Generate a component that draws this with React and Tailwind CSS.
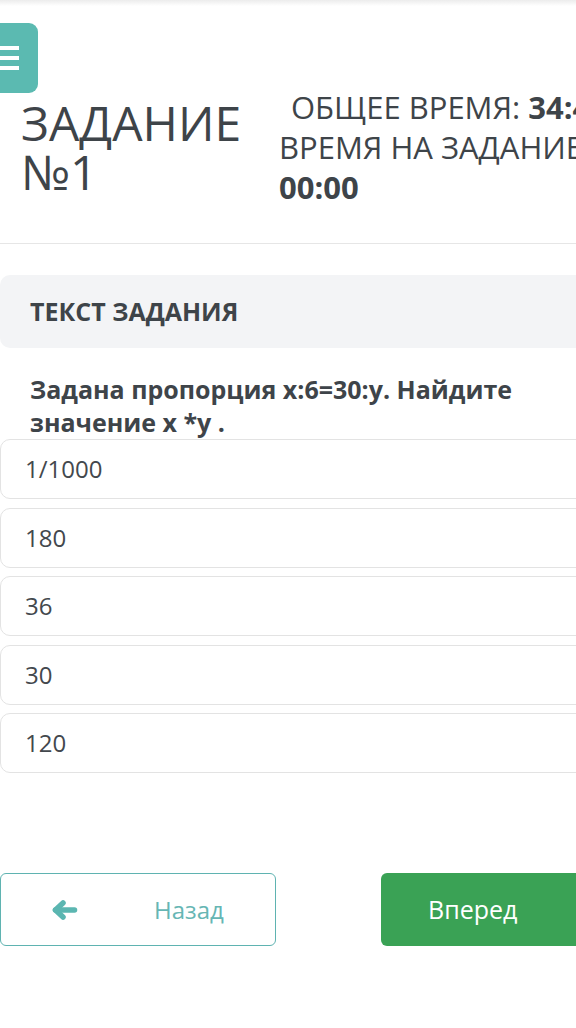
import React from "react";

function ArrowLeft({ className }) {
  return (
    <svg viewBox="0 0 26 20" className={className} fill="none" stroke="currentColor" strokeWidth="5.5" strokeLinecap="round" strokeLinejoin="round">
      <polyline points="11,3 3.5,10 11,17" />
      <line x1="3.5" y1="10" x2="22.5" y2="10" />
    </svg>
  );
}

export default function App() {
  const options = ["1/1000", "180", "36", "30", "120"];
  return (
    <div
      className="relative w-[576px] h-[1028px] overflow-hidden bg-white text-[#3e4449]"
      style={{ fontFamily: '"Open Sans", "Noto Sans", sans-serif' }}
    >
      <div className="h-[6px] bg-gradient-to-b from-[#ececec] to-white" />

      <button className="absolute top-[23px] left-[-10px] w-[48px] h-[70px] rounded-[9px] bg-[#5bbab1] flex flex-col justify-center gap-[6px] pl-[3px]">
        <span className="block w-[26px] h-[4px] bg-white" />
        <span className="block w-[26px] h-[4px] bg-white" />
        <span className="block w-[26px] h-[4px] bg-white" />
      </button>

      <div className="flex items-center pt-[81px] pb-[36px] border-b border-[#e6e6e6] w-[900px]">
        <div className="w-[279px] shrink-0 pl-[21px] text-[48px] leading-[49px] font-normal">
          <div>ЗАДАНИЕ</div>
          <div>№1</div>
        </div>
        <div className="text-[31px] leading-[40px] whitespace-nowrap">
          <div className="pl-[12px]">
            ОБЩЕЕ ВРЕМЯ: <span className="font-bold">34:41</span>
          </div>
          <div>ВРЕМЯ НА ЗАДАНИЕ:</div>
          <div className="font-bold">00:00</div>
        </div>
      </div>

      <div className="mt-[31px] w-[620px] h-[73px] rounded-l-[10px] bg-[#f3f4f6] flex items-center pl-[30px]">
        <span className="text-[25px] font-bold">ТЕКСТ ЗАДАНИЯ</span>
      </div>

      <div className="mt-[25px] pl-[30px] pr-[40px] text-[25px] leading-[33px] font-bold">
        Задана пропорция x:6=30:y. Найдите значение x *y .
      </div>

      <div className="flex flex-col gap-[8.5px] w-[640px]">
        {options.map((o) => (
          <div
            key={o}
            className="h-[60px] border border-[#e3e3e3] rounded-[10px] flex items-center pl-[24px] text-[24px] text-[#43484d]"
          >
            {o}
          </div>
        ))}
      </div>

      <div className="mt-[100px] flex w-[700px]">
        <button className="w-[276px] h-[73px] border border-[#5fb3b1] rounded-[6px] flex items-center pl-[51px]">
          <ArrowLeft className="w-[26px] h-[20px] text-[#5bb6b1]" />
          <span className="ml-[76px] text-[24px] text-[#66b6b4]">Назад</span>
        </button>
        <button className="ml-[105px] w-[260px] h-[73px] rounded-[6px] bg-[#3aa255] flex items-center pl-[47px]">
          <span className="text-[25px] text-white">Вперед</span>
        </button>
      </div>
    </div>
  );
}
